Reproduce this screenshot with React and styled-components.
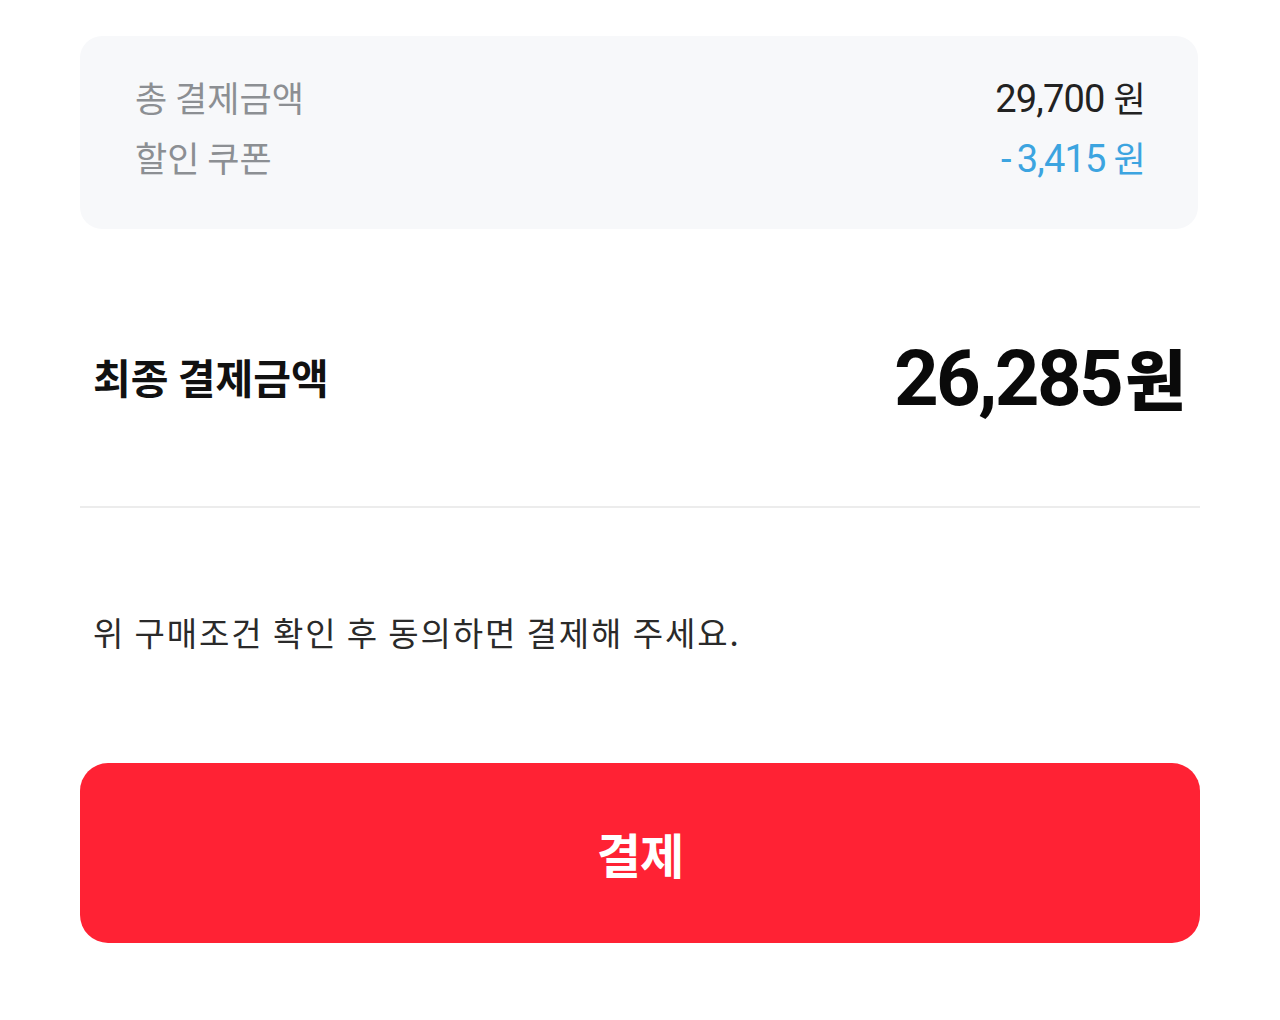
import React from "react";
import styled, { createGlobalStyle } from "styled-components";

const Global = createGlobalStyle`
  html, body { margin: 0; padding: 0; background: #ffffff; }
  body { font-family: Roboto, "Noto Sans CJK KR", sans-serif; }
  * { box-sizing: border-box; }
`;

const Page = styled.div`
  width: 1280px;
  height: 1020px;
  padding: 36px 80px 0 80px;
  display: flex;
  flex-direction: column;
`;

const SummaryCard = styled.div`
  background: #f7f8fa;
  border-radius: 22px;
  padding: 37px 53px 50px 55px;
  display: flex;
  flex-direction: column;
  gap: 14px;
  width: 1118px;
`;

const SummaryRow = styled.div`
  display: flex;
  justify-content: space-between;
  align-items: center;
  height: 46px;
`;

const Label = styled.span`
  font-family: "Noto Sans CJK KR", sans-serif;
  font-size: 35px;
  letter-spacing: 0px;
  color: #8c8f93;
  font-weight: 400;
`;

const Amount = styled.span`
  font-size: 38px;
  letter-spacing: -0.8px;
  color: ${(p) => (p.$discount ? "#3ca4e0" : "#222222")};
  font-weight: 400;
  & > em {
    font-style: normal;
    font-family: "Noto Sans CJK KR", sans-serif;
    font-size: 35px;
    margin-left: ${(p) => (p.$discount ? "8px" : "9px")};
  }
`;

const Dash = styled.span`
  margin-right: 6px;
`;

const TotalRow = styled.div`
  display: flex;
  justify-content: space-between;
  align-items: center;
  height: 110px;
  margin-top: 92px;
  padding: 0 14px 0 13px;
`;

const TotalLabel = styled.span`
  font-family: "Noto Sans CJK KR", sans-serif;
  font-size: 41px;
  font-weight: 700;
  letter-spacing: 0px;
  color: #111111;
`;

const TotalAmount = styled.span`
  font-size: 78px;
  font-weight: 700;
  letter-spacing: -2.6px;
  color: #0a0a0a;
  & > em {
    font-style: normal;
    font-family: "Noto Sans CJK KR", sans-serif;
    font-weight: 900;
    font-size: 66px;
    margin-left: 4px;
    letter-spacing: 0;
  }
`;

const Divider = styled.hr`
  border: none;
  height: 2px;
  background: #ececec;
  margin: 75px 0 0 0;
  width: 1120px;
`;

const Notice = styled.p`
  margin: 102px 0 0 13px;
  font-family: "Noto Sans CJK KR", sans-serif;
  font-size: 33px;
  letter-spacing: 1.9px;
  color: #2a2a2a;
  line-height: 44px;
`;

const PayButton = styled.button`
  margin-top: 109px;
  width: 1120px;
  height: 180px;
  border: none;
  border-radius: 28px;
  background: #ff2234;
  color: #ffffff;
  font-family: "Noto Sans CJK KR", sans-serif;
  font-size: 48px;
  font-weight: 700;
  letter-spacing: -1px;
  display: flex;
  align-items: center;
  justify-content: center;
`;

export default function App() {
  return (
    <>
      <Global />
      <Page>
        <SummaryCard>
          <SummaryRow>
            <Label>총 결제금액</Label>
            <Amount>
              29,700<em>원</em>
            </Amount>
          </SummaryRow>
          <SummaryRow>
            <Label>할인 쿠폰</Label>
            <Amount $discount>
              <Dash>-</Dash>3,415<em>원</em>
            </Amount>
          </SummaryRow>
        </SummaryCard>
        <TotalRow>
          <TotalLabel>최종 결제금액</TotalLabel>
          <TotalAmount>
            26,285<em>원</em>
          </TotalAmount>
        </TotalRow>
        <Divider />
        <Notice>위 구매조건 확인 후 동의하면 결제해 주세요.</Notice>
        <PayButton>결제</PayButton>
      </Page>
    </>
  );
}
